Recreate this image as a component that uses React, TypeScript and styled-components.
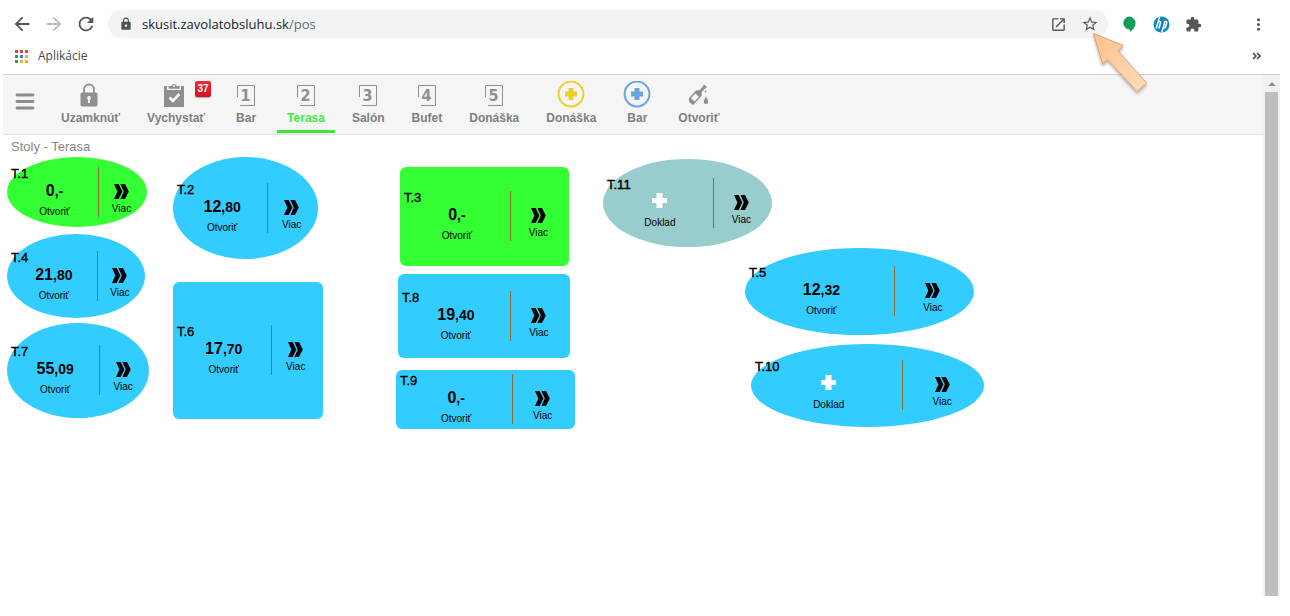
import React from "react";
import styled, { createGlobalStyle } from "styled-components";
import {
  MdArrowBack,
  MdArrowForward,
  MdExtension,
  MdLaunch,
  MdLock,
  MdMoreVert,
  MdRefresh,
  MdStarBorder,
} from "react-icons/md";

const GlobalStyle = createGlobalStyle`
  *, *::before, *::after { box-sizing: border-box; }
  body {
    margin: 0;
    background: #fff;
    font-family: "Liberation Sans", Arial, sans-serif;
  }
  button {
    margin: 0;
    padding: 0;
    border: 0;
    background: none;
    font: inherit;
    color: inherit;
    cursor: pointer;
  }
  svg { display: block; }
`;

const BrowserWindow = styled.div`
  display: flex;
  flex-direction: column;
  min-height: 100vh;
  padding-bottom: 20px;
`;

const Toolbar = styled.header`
  display: flex;
  align-items: center;
  padding: 10px 16px 0 6px;
  color: #54585d;
`;

const ToolButton = styled.button<{ $dim?: boolean }>`
  position: relative;
  display: flex;
  align-items: center;
  justify-content: center;
  flex: none;
  width: 32px;
  height: 28px;
  color: ${(p) => (p.$dim ? "#babcbe" : "inherit")};
`;

const MenuButton = styled(ToolButton)`
  margin-left: 33px;
`;

const Omnibox = styled.div`
  display: flex;
  align-items: center;
  flex: 1;
  height: 28px;
  margin: 0 5px 0 6px;
  padding: 0 2px 0 11px;
  border-radius: 14px;
  background: #f1f3f4;
  font: 13px/20px "Open Sans", sans-serif;
`;

const Address = styled.label`
  display: flex;
  align-items: center;
  flex: 1;
  color: #6a6e73;
`;

const AddressInput = styled.input`
  field-sizing: content;
  margin: 0 0 0 9px;
  padding: 0;
  border: 0;
  outline: 0;
  background: none;
  font: inherit;
  color: #202124;
`;

const PointerArrow = styled.svg`
  position: absolute;
  top: 18px;
  left: 14px;
  z-index: 2;
  pointer-events: none;
`;

const Bookmarks = styled.nav`
  display: flex;
  align-items: center;
  justify-content: space-between;
  height: 36px;
  padding: 0 29px 0 15px;
  font: 12px/16px "Open Sans", sans-serif;
  color: #45484c;
`;

const AppsLink = styled.a`
  display: flex;
  align-items: center;
  gap: 10px;
  color: inherit;
  text-decoration: none;
`;

const Viewport = styled.div`
  display: flex;
  flex: 1;
  margin: 0 10px 0 3px;
  border-top: 1px solid #d2d2d2;
`;

const Page = styled.main`
  display: flex;
  flex-direction: column;
  flex: 1;
`;

const Scrollbar = styled.div`
  display: flex;
  flex-direction: column;
  align-items: center;
  width: 17px;
  background: #f1f1f1;
`;

const ScrollUp = styled.button`
  display: flex;
  align-items: center;
  justify-content: center;
  width: 17px;
  height: 17px;
`;

const ScrollThumb = styled.div`
  flex: 1;
  width: 13px;
  background: #bfbfbf;
`;

const MainNav = styled.nav`
  display: flex;
  gap: 7px;
  height: 60px;
  padding-left: 3px;
  border-bottom: 1px solid #e0e0e0;
  background: #f5f5f5;
`;

const HamburgerButton = styled.button`
  display: flex;
  align-items: center;
  justify-content: center;
  width: 38px;
  height: 52px;
`;

const NavItem = styled.button<{ $active?: boolean }>`
  position: relative;
  display: flex;
  flex-direction: column;
  align-items: center;
  gap: 2px;
  min-width: 48px;
  height: 58px;
  padding: 6px 10px 0;
  border-bottom: 3px solid ${(p) => (p.$active ? "#3de83d" : "transparent")};
  font-size: 12px;
  font-weight: 700;
  line-height: 14px;
  white-space: nowrap;
  color: ${(p) => (p.$active ? "#40ee40" : "#7f7f7f")};
`;

const NavIcon = styled.span`
  display: flex;
  align-items: center;
  justify-content: center;
  width: 28px;
  height: 28px;
`;

const Badge = styled.span`
  position: absolute;
  top: 6px;
  right: 4px;
  min-width: 16px;
  border-radius: 2px;
  background: linear-gradient(#ee2b3a, #cf1220);
  box-shadow: 0 1px 1px rgba(0, 0, 0, 0.3);
  font-size: 10px;
  line-height: 16px;
  text-align: center;
  color: #fff;
`;

const Title = styled.h1`
  margin: 0;
  padding: 1px 8px 0;
  font-size: 13px;
  font-weight: 400;
  line-height: 21px;
  color: #888;
`;

const Floor = styled.section`
  position: relative;
  flex: 1;
  min-height: 280px;
  margin-left: 4px;
`;

type TableData = {
  id: string;
  x: number;
  y: number;
  w: number;
  h: number;
  round?: boolean;
  tone: string;
  whole?: string;
  cents?: string;
};

const BLUE = "#33ccff";
const GREEN = "#33ff33";
const TEAL = "#99cccc";

const TableShape = styled.article<{ $t: TableData }>`
  position: absolute;
  left: ${(p) => p.$t.x}px;
  top: ${(p) => p.$t.y}px;
  display: flex;
  align-items: center;
  width: ${(p) => p.$t.w}px;
  height: ${(p) => p.$t.h}px;
  padding-bottom: ${(p) => p.$t.h % 2}px;
  border-radius: ${(p) => (p.$t.round ? "50%" : "6px")};
  background: ${(p) => p.$t.tone};
  color: #000;
`;

const OpenPart = styled.div`
  display: flex;
  flex-direction: column;
  width: 65%;
  height: 50px;
  padding-left: 4px;
`;

const TableName = styled.h2`
  margin: 0;
  font-size: 13px;
  font-weight: 400;
  line-height: 14px;
  -webkit-text-stroke: 0.4px #000;
`;

const OpenButton = styled.button`
  display: flex;
  flex-direction: column;
  align-items: center;
  gap: 6px;
  font-size: 10px;
  line-height: 10px;
`;

const Amount = styled.strong`
  display: flex;
  align-items: center;
  height: 20px;
  font-size: 16px;
  line-height: 20px;
`;

const Cents = styled.span`
  font-size: 14px;
`;

const PlusMark = styled.svg`
  margin-bottom: 4px;
`;

const MoreButton = styled.button`
  display: flex;
  flex-direction: column;
  align-items: center;
  gap: 5px;
  flex: 1;
  height: 50px;
  padding: 17px 3px 0 0;
  border-left: 1px solid #8a6d2f;
  font-size: 10px;
  line-height: 10px;
`;

const tables: TableData[] = [
  { id: "T.1", x: 0, y: 0, w: 140, h: 70, round: true, tone: GREEN, whole: "0", cents: ",-" },
  { id: "T.2", x: 166, y: 0, w: 145, h: 102, round: true, tone: BLUE, whole: "12", cents: ",80" },
  { id: "T.3", x: 393, y: 10, w: 169, h: 99, tone: GREEN, whole: "0", cents: ",-" },
  { id: "T.11", x: 596, y: 2, w: 169, h: 88, round: true, tone: TEAL },
  { id: "T.4", x: 0, y: 77, w: 138, h: 84, round: true, tone: BLUE, whole: "21", cents: ",80" },
  { id: "T.5", x: 738, y: 91, w: 229, h: 87, round: true, tone: BLUE, whole: "12", cents: ",32" },
  { id: "T.6", x: 166, y: 125, w: 150, h: 137, tone: BLUE, whole: "17", cents: ",70" },
  { id: "T.7", x: 0, y: 166, w: 142, h: 95, round: true, tone: BLUE, whole: "55", cents: ",09" },
  { id: "T.8", x: 391, y: 117, w: 172, h: 84, tone: BLUE, whole: "19", cents: ",40" },
  { id: "T.9", x: 389, y: 213, w: 179, h: 59, tone: BLUE, whole: "0", cents: ",-" },
  { id: "T.10", x: 744, y: 187, w: 233, h: 83, round: true, tone: BLUE },
];

const Chevrons = () => (
  <svg width="15" height="15" viewBox="0 0 15 15" aria-hidden="true">
    <path d="M0 0h4.600l3.800 7.500L4.600 15H0l3.400-7.500zM6.400 0h4.600l3.800 7.500-3.800 7.500H6.400l3.400-7.500z" fill="#000" />
  </svg>
);

const WhitePlus = () => (
  <PlusMark width="15" height="15" viewBox="0 0 15 15" aria-hidden="true">
    <path d="M4.500 0h6v5H15v5h-4.500v5h-6v-5H0V5h4.500z" fill="#fff" />
  </PlusMark>
);

const Table = ({ t }: { t: TableData }) => (
  <TableShape $t={t}>
    <OpenPart>
      <TableName>{t.id}</TableName>
      <OpenButton>
        <Amount>
          {t.whole ? (
            <>
              {t.whole}
              <Cents>{t.cents}</Cents>
            </>
          ) : (
            <WhitePlus />
          )}
        </Amount>
        {t.whole ? "Otvoriť" : "Doklad"}
      </OpenButton>
    </OpenPart>
    <MoreButton>
      <Chevrons />
      Viac
    </MoreButton>
  </TableShape>
);

const PadlockIcon = () => (
  <svg width="22" height="24" viewBox="0 0 22 24">
    <path d="M4 10V6.500a5 5 0 0 1 10 0V10" fill="none" stroke="#8f8f8f" strokeWidth="1.800" />
    <rect x="0.500" y="9.500" width="17" height="14" rx="2" fill="#8f8f8f" />
    <path d="M9 13a1.900 1.900 0 0 1 1 3.500V20H8v-3.500A1.900 1.900 0 0 1 9 13z" fill="#f5f5f5" />
  </svg>
);

const ClipboardIcon = () => (
  <svg width="26" height="24" viewBox="0 0 26 24">
    <path d="M1 3h3v4h14V3h3v21H1z" fill="#8f8f8f" />
    <path d="M5.500 3H8.500a2.600 2.600 0 0 1 5 0h3v2.800h-11z" fill="#8f8f8f" />
    <circle cx="11" cy="3" r="1" fill="#f5f5f5" />
    <path d="M6.500 14.500l3.400 3.300 6.400-6.600" fill="none" stroke="#fff" strokeWidth="2.600" />
  </svg>
);

const NumberIcon = ({ n }: { n: string }) => (
  <svg width="20" height="22" viewBox="0 0 20 22">
    <path d="M1.500 13V1.500H18.500V21.500H4" fill="none" stroke="#8f8f8f" />
    <text
      x="9.500"
      y="17"
      textAnchor="middle"
      fontFamily="'DejaVu Sans Condensed', 'DejaVu Sans', sans-serif"
      fontSize="16"
      fontWeight="700"
      fill="#8f8f8f"
    >
      {n}
    </text>
  </svg>
);

const CirclePlusIcon = ({ color }: { color: string }) => (
  <svg width="28" height="28" viewBox="0 0 28 28">
    <circle cx="14" cy="13" r="12.400" fill="none" stroke={color} strokeWidth="2" />
    <path d="M11.500 7h5v3.500H20v5h-3.500V19h-5v-3.500H8v-5h3.500z" fill={color} />
  </svg>
);

const BottleIcon = () => (
  <svg width="20" height="22" viewBox="0 0 20 22">
    <g transform="rotate(42 8 11)">
      <path
        d="M6.300-1.500h3.800V.8h-.5v4.400c0 1.400 2.400 1.800 2.400 4V20a1.300 1.300 0 0 1-1.300 1.300H5.500A1.300 1.300 0 0 1 4.200 20V9.200c0-2.200 2.500-2.600 2.500-4V.8h-.4z"
        fill="#8f8f8f"
      />
      <rect x="5.700" y="11" width="4.800" height="6.500" fill="#f5f5f5" />
    </g>
    <path d="M17 12.500c1.200 2.200 2.200 3.600 2.200 5.200a2.200 2.200 0 0 1-4.400 0c0-1.600 1-3 2.200-5.200z" fill="#8f8f8f" />
    <circle cx="16.500" cy="7.500" r="0.900" fill="#8f8f8f" />
  </svg>
);

type NavEntry = { label: string; icon: React.ReactNode; badge?: string; active?: boolean };

const navEntries: NavEntry[] = [
  { label: "Uzamknúť", icon: <PadlockIcon /> },
  { label: "Vychystať", icon: <ClipboardIcon />, badge: "37" },
  { label: "Bar", icon: <NumberIcon n="1" /> },
  { label: "Terasa", icon: <NumberIcon n="2" />, active: true },
  { label: "Salón", icon: <NumberIcon n="3" /> },
  { label: "Bufet", icon: <NumberIcon n="4" /> },
  { label: "Donáška", icon: <NumberIcon n="5" /> },
  { label: "Donáška", icon: <CirclePlusIcon color="#ecd02c" /> },
  { label: "Bar", icon: <CirclePlusIcon color="#68a5e0" /> },
  { label: "Otvoriť", icon: <BottleIcon /> },
];

const appColors = [
  "#d9483b", "#d9483b", "#d9483b",
  "#2f9e57", "#3b7de0", "#e8b321",
  "#2f9e57", "#e8b321", "#e8b321",
];

const AppsGrid = () => (
  <svg width="13" height="13" viewBox="0 0 13 13">
    {appColors.map((c, i) => (
      <rect key={i} x={(i % 3) * 5} y={Math.floor(i / 3) * 5} width="3" height="3" fill={c} />
    ))}
  </svg>
);

const HangoutsIcon = () => (
  <svg width="14" height="17" viewBox="0 0 14 17">
    <path d="M7 .5a6.500 6.500 0 0 1 6.500 6.500c0 3.800-2.700 7.200-5.700 9v-2.600H7A6.500 6.500 0 0 1 7 .5z" fill="#0f9d58" />
  </svg>
);

const HpIcon = () => (
  <svg width="17" height="17" viewBox="0 0 17 17">
    <circle cx="8.500" cy="8.500" r="8" fill="#0c86c9" />
    <path
      d="M6.500 1L3.200 12.500M4.800 5.500h1.900q1.200 0 .8 1.300l-1.600 5.700M12.200 4.900L8.900 16M11 5.500h1.900q1.200 0 .8 1.300l-1.200 4q-.4 1.300-1.600 1.300H9.800"
      fill="none"
      stroke="#fff"
      strokeWidth="1.500"
    />
  </svg>
);

const Pointer = () => (
  <PointerArrow width="64" height="70" viewBox="0 0 64 70" aria-hidden="true">
    <defs>
      <linearGradient id="peach" x1="0" y1="0" x2="1" y2="1">
        <stop offset="0" stopColor="#fbc08a" />
        <stop offset="1" stopColor="#fddcc0" />
      </linearGradient>
      <filter id="soft" x="-20%" y="-20%" width="140%" height="140%">
        <feDropShadow dx="0" dy="2" stdDeviation="1.500" floodColor="#000" floodOpacity="0.3" />
      </filter>
    </defs>
    <path
      d="M5.500 5.500L35.200 17.500 30 23 58.500 55 49 63.500 19.500 31.500 14.500 36z"
      fill="url(#peach)"
      stroke="#dfa06a"
      filter="url(#soft)"
    />
  </PointerArrow>
);

export default function App() {
  return (
    <BrowserWindow>
      <GlobalStyle />
      <Toolbar>
        <ToolButton aria-label="Späť"><MdArrowBack size={22} /></ToolButton>
        <ToolButton aria-label="Dopredu" $dim><MdArrowForward size={22} /></ToolButton>
        <ToolButton aria-label="Obnoviť"><MdRefresh size={22} /></ToolButton>
        <Omnibox>
          <Address>
            <MdLock size={14} color="#4d5156" />
            <AddressInput aria-label="Adresa" defaultValue="skusit.zavolatobsluhu.sk" />
            <span>/pos</span>
          </Address>
          <ToolButton aria-label="Otvoriť v okne"><MdLaunch size={17} /></ToolButton>
          <ToolButton aria-label="Pridať záložku">
            <MdStarBorder size={18} />
            <Pointer />
          </ToolButton>
        </Omnibox>
        <ToolButton aria-label="Hangouts"><HangoutsIcon /></ToolButton>
        <ToolButton aria-label="HP"><HpIcon /></ToolButton>
        <ToolButton aria-label="Rozšírenia"><MdExtension size={17} /></ToolButton>
        <MenuButton aria-label="Ponuka"><MdMoreVert size={19} /></MenuButton>
      </Toolbar>
      <Bookmarks>
        <AppsLink href="#apps">
          <AppsGrid />
          Aplikácie
        </AppsLink>
        <button aria-label="Ďalšie záložky">
          <svg width="9" height="8" viewBox="0 0 9 8">
            <path d="M1 1l3 3-3 3M5 1l3 3-3 3" fill="none" stroke="#45484c" strokeWidth="1.600" />
          </svg>
        </button>
      </Bookmarks>
      <Viewport>
        <Page>
          <MainNav>
            <HamburgerButton aria-label="Menu">
              <svg width="20" height="18" viewBox="0 0 20 18">
                <path d="M2 3h16M2 9.500h16M2 16h16" stroke="#8c8c8c" strokeWidth="2.800" strokeLinecap="round" />
              </svg>
            </HamburgerButton>
            {navEntries.map((e, i) => (
              <NavItem key={i} $active={e.active}>
                <NavIcon>{e.icon}</NavIcon>
                {e.label}
                {e.badge && <Badge>{e.badge}</Badge>}
              </NavItem>
            ))}
          </MainNav>
          <Title>Stoly - Terasa</Title>
          <Floor>
            {tables.map((t) => (
              <Table key={t.id} t={t} />
            ))}
          </Floor>
        </Page>
        <Scrollbar>
          <ScrollUp aria-label="Nahor">
            <svg width="8" height="4" viewBox="0 0 8 4">
              <path d="M0 4l4-4 4 4z" fill="#8f8f8f" />
            </svg>
          </ScrollUp>
          <ScrollThumb />
        </Scrollbar>
      </Viewport>
    </BrowserWindow>
  );
}
